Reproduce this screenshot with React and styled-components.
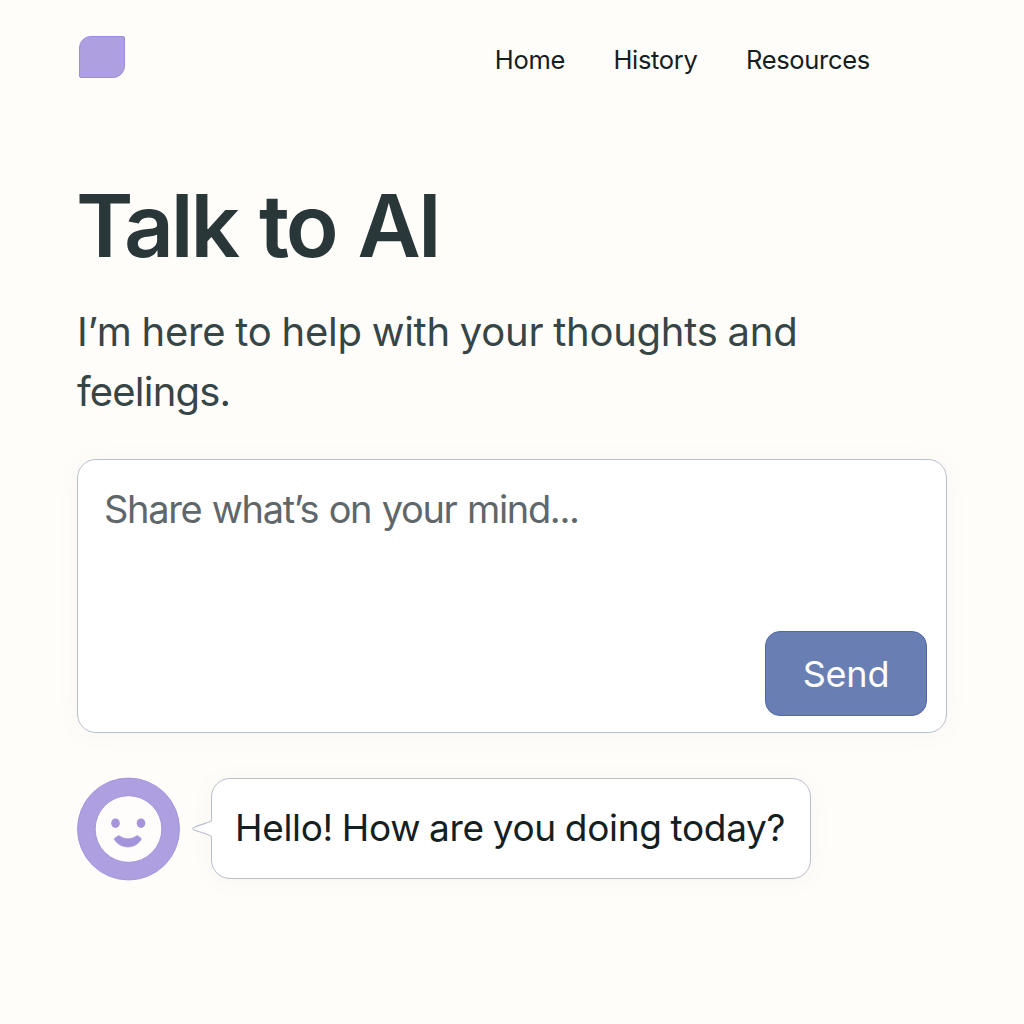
import React from "react";
import styled, { createGlobalStyle } from "styled-components";

const GlobalStyle = createGlobalStyle`
  * { box-sizing: border-box; }
  body {
    margin: 0;
    background: #fffdfa;
    font-family: Inter, "Liberation Sans", sans-serif;
    color: #14201f;
  }
`;

const Page = styled.div`
  min-height: 1024px;
  padding: 36px 77px 0 77px;
`;

const Header = styled.header`
  display: flex;
  align-items: flex-start;
  justify-content: space-between;
  height: 46px;
  padding: 0 77px 0 2px;
`;

const Logo = styled.div`
  width: 46px;
  height: 42px;
  background: #ae9fe0;
  border: 1px solid #a08cdc;
  border-radius: 12px 2px 12px 2px;
`;

const Nav = styled.nav`
  display: flex;
  gap: 48.3px;
  padding-top: 8px;
`;

const NavLink = styled.a`
  font-size: 25.5px;
  line-height: 31px;
  letter-spacing: -0.3px;
  color: #14201f;
  text-decoration: none;
`;

const Title = styled.h1`
  margin: 92px 0 0 -1px;
  font-size: 87px;
  line-height: 104px;
  font-weight: 600;
  letter-spacing: -3.1px;
  word-spacing: 3.2px;
  color: #2a3738;
`;

const Lede = styled.p`
  margin: 24px 0 0;
  font-size: 40px;
  line-height: 60px;
  color: #364546;
`;

const LedeLine = styled.span`
  display: block;
  letter-spacing: ${(p) => p.$tracking};
  word-spacing: -1px;
`;

const Composer = styled.form`
  display: flex;
  flex-direction: column;
  justify-content: space-between;
  height: 274px;
  margin: 37px 0 0;
  padding: 25px 19px 16px 26px;
  background: #fff;
  border: 1px solid #b9bfcb;
  border-radius: 19px;
  box-shadow: 0 2px 22px rgba(120, 90, 60, 0.05);
`;

const Placeholder = styled.div`
  font-size: 38px;
  line-height: 48px;
  letter-spacing: -1.35px;
  word-spacing: 1.2px;
  color: #5f676a;
`;

const SendButton = styled.button`
  align-self: flex-end;
  width: 162px;
  height: 85px;
  padding: 1px 0 0;
  font-family: inherit;
  font-size: 36px;
  line-height: 44px;
  letter-spacing: -0.2px;
  color: #fff;
  background: #697eb3;
  border: 1px solid #4f68a8;
  border-radius: 15px;
`;

const Message = styled.div`
  display: flex;
  align-items: center;
  margin-top: 44px;
`;

const Avatar = styled.svg`
  display: block;
  width: 104px;
  height: 104px;
`;

const Tail = styled.svg`
  display: block;
  position: relative;
  z-index: 1;
  width: 22px;
  height: 20px;
  margin: 0 -2px 0 10px;
`;

const Bubble = styled.div`
  display: flex;
  align-items: center;
  width: 600px;
  height: 101px;
  margin-bottom: 1px;
  padding: 0 0 1px 23px;
  font-size: 37px;
  line-height: 46px;
  letter-spacing: -0.33px;
  word-spacing: -1.1px;
  white-space: nowrap;
  color: #14201f;
  background: #fff;
  border: 1px solid #b9bfcb;
  border-radius: 19px;
  box-shadow: 0 2px 22px rgba(120, 90, 60, 0.05);
`;

export default function App() {
  return (
    <Page>
      <GlobalStyle />
      <Header>
        <Logo />
        <Nav>
          <NavLink>Home</NavLink>
          <NavLink>History</NavLink>
          <NavLink>Resources</NavLink>
        </Nav>
      </Header>
      <main>
        <Title>Talk to AI</Title>
        <Lede>
          <LedeLine $tracking="-0.25px">I’m here to help with your thoughts and</LedeLine>
          <LedeLine $tracking="-0.8px">feelings.</LedeLine>
        </Lede>
        <Composer>
          <Placeholder>Share what’s on your mind...</Placeholder>
          <SendButton type="button">Send</SendButton>
        </Composer>
        <Message>
          <Avatar viewBox="0 0 104 104">
            <circle cx="51.5" cy="52" r="51" fill="#ae9fe0" stroke="#a08cdc" strokeWidth="0.8" />
            <circle cx="51.5" cy="52" r="33.3" fill="#fffdfb" stroke="#a08cdc" strokeWidth="0.8" />
            <ellipse cx="38.5" cy="46.2" rx="4.3" ry="4.8" fill="#a594dc" />
            <ellipse cx="64" cy="46.2" rx="4.3" ry="4.8" fill="#a594dc" />
            <path
              d="M41.6 58.5 Q51 65 60.4 58.5 L64 61.2 Q64.5 62.1 63.9 63 Q59 70 51 70.1 Q42.6 70 37.6 63 Q37 62.1 37.6 61.2 Z"
              fill="#a594dc"
              stroke="#a594dc"
              strokeWidth="0.6"
              strokeLinejoin="round"
            />
          </Avatar>
          <Tail viewBox="0 0 22 20">
            <path d="M20.5 2 C18 3.4 8 6 3.5 8.2 Q0 9.7 3.5 11.2 C7 12.6 16 14.6 20.5 17.5" fill="#fff" stroke="#b9bfcb" strokeWidth="1.1" />
            <path d="M20.5 2.4 V17" fill="none" stroke="#fff" strokeWidth="1.6" />
          </Tail>
          <Bubble>Hello! How are you doing today?</Bubble>
        </Message>
      </main>
    </Page>
  );
}
